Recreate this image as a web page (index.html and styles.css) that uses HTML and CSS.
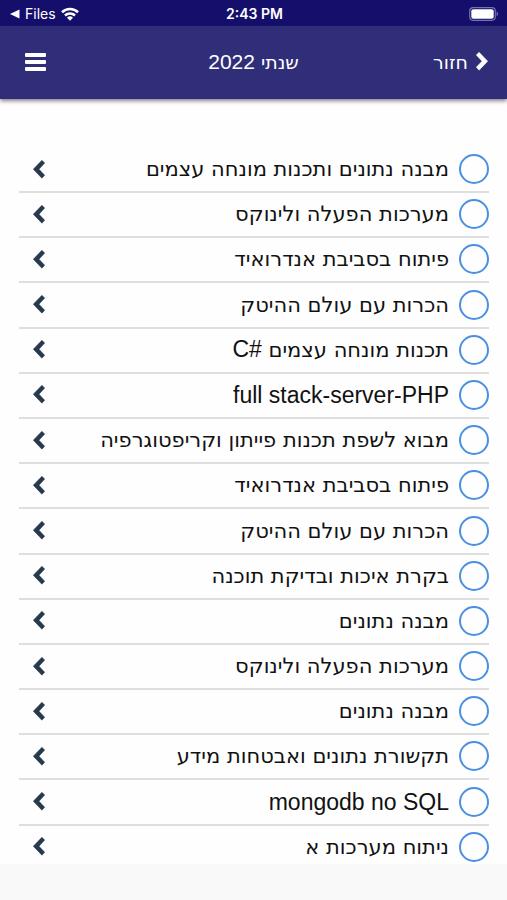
FILE: index.html
```html
<!DOCTYPE html>
<html lang="he" dir="rtl">
<head>
<meta charset="utf-8">
<meta name="viewport" content="width=device-width, initial-scale=1">
<title>שנתי 2022</title>
<link rel="stylesheet" href="styles.css">
</head>
<body>
<svg class="defs" aria-hidden="true">
  <symbol id="chevron" viewBox="0 0 12 19"><path d="M8.900 .3 11.700 3.100 6 9.200l5.700 6.100-2.800 2.900L.3 9.200z" fill="currentColor" stroke="currentColor" stroke-width=".5" stroke-linejoin="round"/></symbol>
</svg>
<div class="status" dir="ltr">
  <div class="status-left">
    <svg width="10" height="10" viewBox="0 0 10 10" aria-hidden="true"><path d="M0 5 9.500 .5v9z" fill="currentColor"/></svg>
    <span>Files</span>
    <svg class="wifi" width="18" height="14" viewBox="0 0 18 14" aria-hidden="true"><g fill="none" stroke="currentColor" stroke-width="2.600"><path d="M1 5.200a11.500 11.500 0 0 1 16 0"/><path d="M4 8.500a7.200 7.200 0 0 1 10 0"/></g><path d="M9 13.700 6 10.800a4.300 4.300 0 0 1 6 0z" fill="currentColor"/></svg>
  </div>
  <span class="time">2:43 PM</span>
  <div class="status-right">
    <svg width="30" height="14" viewBox="0 0 30 14" aria-hidden="true"><rect x=".7" y=".7" width="25.600" height="12.600" rx="3.500" fill="none" stroke="#7772ad" stroke-width="1.200"/><rect x="2.300" y="2.300" width="22.400" height="9.400" rx="2" fill="#fff"/><path d="M27.600 4.600v4.800c2-1 2-3.800 0-4.800z" fill="#7772ad"/></svg>
  </div>
</div>
<header class="bar">
  <a class="back" href="#"><svg class="back-icon" width="12" height="19" aria-hidden="true"><use href="#chevron"/></svg>חזור</a>
  <h1>שנתי <span class="latin">2022</span></h1>
  <button class="menu" type="button" aria-label="תפריט"><svg width="21" height="18" viewBox="0 0 21 18" aria-hidden="true"><g fill="currentColor"><rect width="21" height="4" rx="1"/><rect y="7" width="21" height="4" rx="1"/><rect y="14" width="21" height="4" rx="1"/></g></svg></button>
</header>
<main>
  <ul class="list">
    <li><label><input type="checkbox"><span>מבנה נתונים ותכנות מונחה עצמים</span></label><svg class="go" aria-hidden="true"><use href="#chevron"/></svg></li>
    <li><label><input type="checkbox"><span>מערכות הפעלה ולינוקס</span></label><svg class="go" aria-hidden="true"><use href="#chevron"/></svg></li>
    <li><label><input type="checkbox"><span>פיתוח בסביבת אנדרואיד</span></label><svg class="go" aria-hidden="true"><use href="#chevron"/></svg></li>
    <li><label><input type="checkbox"><span>הכרות עם עולם ההיטק</span></label><svg class="go" aria-hidden="true"><use href="#chevron"/></svg></li>
    <li><label><input type="checkbox"><span>תכנות מונחה עצמים <bdi class="latin" dir="ltr">C#</bdi></span></label><svg class="go" aria-hidden="true"><use href="#chevron"/></svg></li>
    <li><label><input type="checkbox"><span class="latin">full stack-server-PHP</span></label><svg class="go" aria-hidden="true"><use href="#chevron"/></svg></li>
    <li><label><input type="checkbox"><span>מבוא לשפת תכנות פייתון וקריפטוגרפיה</span></label><svg class="go" aria-hidden="true"><use href="#chevron"/></svg></li>
    <li><label><input type="checkbox"><span>פיתוח בסביבת אנדרואיד</span></label><svg class="go" aria-hidden="true"><use href="#chevron"/></svg></li>
    <li><label><input type="checkbox"><span>הכרות עם עולם ההיטק</span></label><svg class="go" aria-hidden="true"><use href="#chevron"/></svg></li>
    <li><label><input type="checkbox"><span>בקרת איכות ובדיקת תוכנה</span></label><svg class="go" aria-hidden="true"><use href="#chevron"/></svg></li>
    <li><label><input type="checkbox"><span>מבנה נתונים</span></label><svg class="go" aria-hidden="true"><use href="#chevron"/></svg></li>
    <li><label><input type="checkbox"><span>מערכות הפעלה ולינוקס</span></label><svg class="go" aria-hidden="true"><use href="#chevron"/></svg></li>
    <li><label><input type="checkbox"><span>מבנה נתונים</span></label><svg class="go" aria-hidden="true"><use href="#chevron"/></svg></li>
    <li><label><input type="checkbox"><span>תקשורת נתונים ואבטחות מידע</span></label><svg class="go" aria-hidden="true"><use href="#chevron"/></svg></li>
    <li><label><input type="checkbox"><span class="latin">mongodb no SQL</span></label><svg class="go" aria-hidden="true"><use href="#chevron"/></svg></li>
    <li><label><input type="checkbox"><span>ניתוח מערכות א</span></label><svg class="go" aria-hidden="true"><use href="#chevron"/></svg></li>
  </ul>
</main>
<footer class="foot"></footer>
</body>
</html>
```
FILE: styles.css
```css
* {
  box-sizing: border-box;
}

body {
  margin: 0;
  min-height: 100vh;
  display: flex;
  flex-direction: column;
  background: #fefefe;
  color: #111;
  font-family: "DejaVu Sans", "Liberation Sans", Arial, sans-serif;
}

.defs {
  position: absolute;
  width: 0;
  height: 0;
}

.latin {
  font-family: "Liberation Sans", Arial, sans-serif;
}

.status {
  display: grid;
  grid-template-columns: 1fr auto 1fr;
  align-items: center;
  height: 26px;
  padding: 1px 8px 0 10px;
  background: #150f6c;
  color: #fff;
  font-family: Inter, sans-serif;
  font-size: 14px;
}

.status-left {
  display: flex;
  align-items: center;
  gap: 5px;
}

.status-right {
  display: flex;
  justify-content: flex-end;
}

.time {
  font-weight: 600;
}

.bar {
  display: grid;
  grid-template-columns: 1fr auto 1fr;
  align-items: center;
  height: 73px;
  padding: 0 19px 2px;
  background: #302e78;
  color: #fff;
  box-shadow: 0 2px 4px rgba(40, 20, 40, 0.55);
}

.bar h1 {
  margin: 0;
  font-size: 19px;
  font-weight: 400;
}

.bar .latin {
  font-size: 21px;
}

.back {
  display: flex;
  align-items: center;
  gap: 8px;
  color: inherit;
  font-size: 19px;
  text-decoration: none;
}

.back-icon {
  transform: scaleX(-1);
}

.menu {
  justify-self: end;
  display: flex;
  margin-inline-end: 6px;
  padding: 0;
  border: 0;
  background: none;
  color: inherit;
}

main {
  flex: 1;
  display: flex;
  padding: 49px 18px 0 19px;
}

.list {
  flex: 1;
  display: flex;
  flex-direction: column;
  justify-content: space-between;
  margin: 0;
  padding: 0;
  list-style: none;
}

.list li {
  display: flex;
  align-items: center;
  justify-content: space-between;
  padding: 6px 0 7px 14px;
  border-bottom: 2px solid #dedede;
}

.list li:last-child {
  padding-bottom: 2px;
  border-bottom: 0;
}

.list label {
  display: flex;
  align-items: center;
  gap: 10px;
  font-size: 21px;
  line-height: 30px;
}

.list .latin {
  font-size: 23px;
  line-height: 24px;
}

.list input {
  appearance: none;
  width: 30px;
  height: 30px;
  margin: 0;
  border: 2px solid #4a90e2;
  border-radius: 50%;
}

.go {
  width: 12px;
  height: 19px;
  color: #26394d;
}

.foot {
  height: 36px;
  background: #f9f9f9;
}
```
